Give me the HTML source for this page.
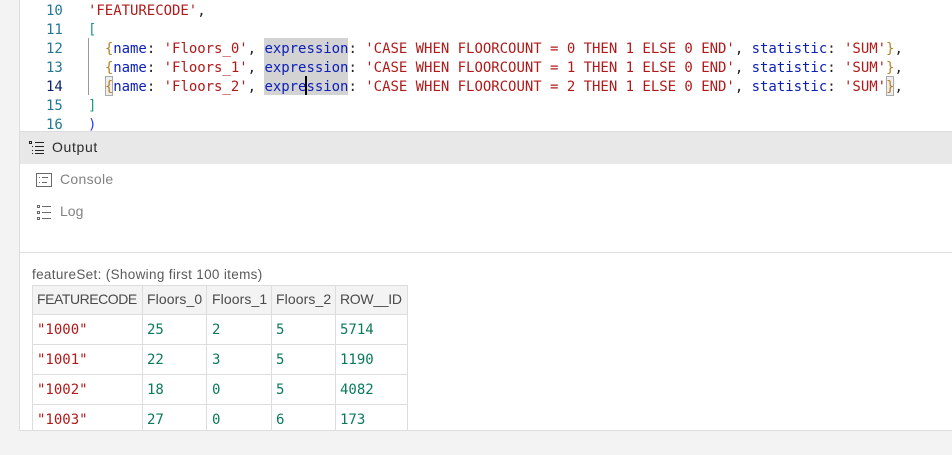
<!DOCTYPE html>
<html><head><meta charset="utf-8"><style>
html,body{margin:0;padding:0;width:952px;height:455px;overflow:hidden;background:#f3f3f3}
#main{position:absolute;left:19px;top:0;width:933px;height:430px;background:#fff;border-left:1px solid #ddd;border-bottom:1px solid #ddd;box-sizing:content-box}
.l,.n,.c{position:absolute;font:14px/19px "DejaVu Sans Mono",monospace;white-space:pre}
.n{left:46px;color:#237893}
.l{left:88px;color:#222;letter-spacing:-0.03px}
.s{color:#b11a1a}.k{color:#0b1fb8}.b{color:#b5811f}.g{color:#1f9a8a}.p{color:#2a3cff}
.hl{position:absolute;left:264px;width:84px;height:19px;background:#d3d3d3}
.ui{position:absolute;font:14px/18px "Liberation Sans",sans-serif;white-space:pre}
.v{position:absolute;background:#ddd;width:1px;top:285px;height:145px}
.h{position:absolute;background:#ddd;height:1px;left:32px;width:376px}
.c{color:#b11a1a;line-height:20px}.d{color:#0a7a5a}
</style></head><body>
<div id="main"></div>
<div style="position:absolute;left:20px;top:131px;width:932px;height:33px;background:#e8e8e8;border-top:1px solid #ddd;box-sizing:border-box"></div>
<div style="position:absolute;left:20px;top:252px;width:932px;height:1px;background:#ddd"></div>
<div class="hl" style="top:38px"></div><div class="hl" style="top:57px"></div><div class="hl" style="top:76px"></div>
<div style="position:absolute;left:88px;top:38px;width:1px;height:57px;background:#999"></div>
<div style="position:absolute;left:105px;top:76px;width:6px;height:18px;background:#eee;border:1px solid #aaa"></div>
<div style="position:absolute;left:886px;top:76px;width:6px;height:18px;background:#eee;border:1px solid #aaa"></div>
<div style="position:absolute;left:305px;top:76px;width:2px;height:19px;background:#000;z-index:3"></div>
<div class="n" style="top:2px">10</div><div class="n" style="top:21px">11</div><div class="n" style="top:40px">12</div><div class="n" style="top:59px">13</div><div class="n" style="top:78px;color:#0b216f">14</div><div class="n" style="top:97px">15</div><div class="n" style="top:116px;height:15px;overflow:hidden">16</div>
<div class="l" style="top:1px;padding-top:1px"><span class="s">'FEATURECODE'</span>,</div>
<div class="l" style="top:21px"><span class="g">[</span></div>
<div class="l" style="top:40px">  <span class="b">{</span><span class="k">name</span>: <span class="s">'Floors_0'</span>, <span class="k">expression</span>: <span class="s">'CASE WHEN FLOORCOUNT = 0 THEN 1 ELSE 0 END'</span>, <span class="k">statistic</span>: <span class="s">'SUM'</span><span class="b">}</span>,</div>
<div class="l" style="top:59px">  <span class="b">{</span><span class="k">name</span>: <span class="s">'Floors_1'</span>, <span class="k">expression</span>: <span class="s">'CASE WHEN FLOORCOUNT = 1 THEN 1 ELSE 0 END'</span>, <span class="k">statistic</span>: <span class="s">'SUM'</span><span class="b">}</span>,</div>
<div class="l" style="top:78px">  <span class="b">{</span><span class="k">name</span>: <span class="s">'Floors_2'</span>, <span class="k">expression</span>: <span class="s">'CASE WHEN FLOORCOUNT = 2 THEN 1 ELSE 0 END'</span>, <span class="k">statistic</span>: <span class="s">'SUM'</span><span class="b">}</span>,</div>
<div class="l" style="top:97px"><span class="g">]</span></div>
<div class="l" style="top:116px;height:15px;overflow:hidden"><span class="p">)</span></div>

<svg style="position:absolute;left:28px;top:139px" width="18" height="18" fill="none" stroke="#222"><rect x="1.5" y="2.5" width="2" height="2"/><path d="M7 3.5h9M7 7.5h9M7 11.5h9M7 14.5h9"/><path d="M4 7.5h1M4 11.5h1M4 14.5h1"/></svg>
<div class="ui" style="left:52px;top:138px;color:#2b2b2b;letter-spacing:.65px">Output</div>
<svg style="position:absolute;left:35px;top:172px" width="18" height="17" fill="none" stroke="#6a6a6a"><rect x="1.5" y="1.5" width="15" height="13"/><path d="M4 5.5h1M7 5.5h6M4 10.5h1M7 10.5h5"/></svg>
<div class="ui" style="left:60px;top:170px;color:#828282;letter-spacing:.3px">Console</div>
<svg style="position:absolute;left:36px;top:204px" width="17" height="18" fill="none" stroke="#6a6a6a"><rect x="1.5" y="1.5" width="2" height="2"/><rect x="1.5" y="7.5" width="2" height="2"/><rect x="1.5" y="13.5" width="2" height="2"/><path d="M6 2.5h9M6 8.5h9M6 14.5h9"/></svg>
<div class="ui" style="left:60px;top:202px;color:#828282">Log</div>

<div class="ui" style="left:32px;top:266px;color:#5a5a5a;font-size:13.5px;letter-spacing:.33px">featureSet: (Showing first 100 items)</div>
<div style="position:absolute;left:32px;top:285px;width:376px;height:29px;background:#f3f3f3"></div>
<div class="h" style="top:285px"></div><div class="h" style="top:314px"></div><div class="h" style="top:344px"></div><div class="h" style="top:374px"></div><div class="h" style="top:404px"></div>
<div class="v" style="left:32px"></div><div class="v" style="left:142px"></div><div class="v" style="left:206px"></div><div class="v" style="left:271px"></div><div class="v" style="left:335px"></div><div class="v" style="left:407px"></div>
<div class="ui" style="left:37px;top:290px;color:#4a4a4a;letter-spacing:-.45px">FEATURECODE</div>
<div class="ui" style="left:147px;top:290px;color:#4a4a4a;letter-spacing:.1px">Floors_0</div>
<div class="ui" style="left:212px;top:290px;color:#4a4a4a;letter-spacing:.1px">Floors_1</div>
<div class="ui" style="left:276px;top:290px;color:#4a4a4a;letter-spacing:.1px">Floors_2</div>
<div class="ui" style="left:340px;top:290px;color:#4a4a4a;letter-spacing:-.3px">ROW__ID</div>

<div class="c" style="left:37px;top:320px">"1000"</div><div class="c d" style="left:147px;top:320px">25</div><div class="c d" style="left:212px;top:320px">2</div><div class="c d" style="left:276px;top:320px">5</div><div class="c d" style="left:340px;top:320px">5714</div>
<div class="c" style="left:37px;top:350px">"1001"</div><div class="c d" style="left:147px;top:350px">22</div><div class="c d" style="left:212px;top:350px">3</div><div class="c d" style="left:276px;top:350px">5</div><div class="c d" style="left:340px;top:350px">1190</div>
<div class="c" style="left:37px;top:380px">"1002"</div><div class="c d" style="left:147px;top:380px">18</div><div class="c d" style="left:212px;top:380px">0</div><div class="c d" style="left:276px;top:380px">5</div><div class="c d" style="left:340px;top:380px">4082</div>
<div class="c" style="left:37px;top:410px">"1003"</div><div class="c d" style="left:147px;top:410px">27</div><div class="c d" style="left:212px;top:410px">0</div><div class="c d" style="left:276px;top:410px">6</div><div class="c d" style="left:340px;top:410px">173</div>
</body></html>
